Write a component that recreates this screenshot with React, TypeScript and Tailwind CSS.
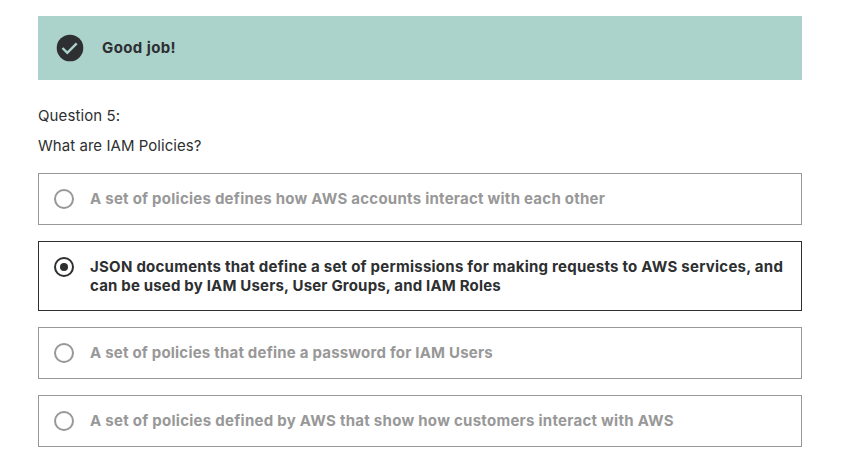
type Option = { lines: { text: string; tracking: string }[]; selected?: boolean };

const options: Option[] = [
  { lines: [{ text: 'A set of policies defines how AWS accounts interact with each other', tracking: 'tracking-[0.25px]' }] },
  {
    lines: [
      { text: 'JSON documents that define a set of permissions for making requests to AWS services, and', tracking: 'tracking-[0.25px]' },
      { text: 'can be used by IAM Users, User Groups, and IAM Roles', tracking: 'tracking-[0.18px]' },
    ],
    selected: true,
  },
  { lines: [{ text: 'A set of policies that define a password for IAM Users', tracking: 'tracking-[0.21px]' }] },
  { lines: [{ text: 'A set of policies defined by AWS that show how customers interact with AWS', tracking: 'tracking-[0.27px]' }] },
];

function Radio({ selected }: { selected?: boolean }) {
  return (
    <svg className="mt-[15px] size-5 shrink-0" viewBox="0 0 20 20" fill="none">
      <circle cx="10" cy="10" r="9" stroke="currentColor" strokeWidth="2" />
      {selected && <circle cx="10" cy="10" r="4" fill="currentColor" />}
    </svg>
  );
}

export default function App() {
  return (
    <main className="h-[462px] w-[846px] overflow-hidden bg-white pt-4 pl-[38px] font-['Inter',sans-serif] text-[#2d2f31]">
      <div className="flex h-16 w-[764px] items-center bg-[#acd2cc] pl-[18px]">
        <svg className="size-7" viewBox="0 0 28 28" fill="none">
          <circle cx="14" cy="14" r="13.3" fill="#2d2f31" />
          <path d="m6.5 14 4.8 4.8 9.4-9.4" stroke="#acd2cc" strokeWidth="2.4" />
        </svg>
        <span className="ml-[18px] text-[15px] font-bold tracking-[0.4px]">Good job!</span>
      </div>
      <p className="mt-[26px] text-[15px] leading-5 tracking-[0.1px]">Question 5:</p>
      <p className="mt-[10px] text-[15px] leading-5 tracking-[0.05px]">What are IAM Policies?</p>
      <div className="mt-[17px] flex w-[764px] flex-col gap-4">
        {options.map((option) => (
          <div
            key={option.lines[0].text}
            className={`flex border pl-[15px] ${option.selected ? 'h-[70px] border-[#2d2f31]' : 'h-[52px] border-[#989898] text-[#989898]'}`}
          >
            <Radio selected={option.selected} />
            <div className="ml-4 pt-[15px] text-[15px] leading-[19px] font-bold whitespace-nowrap">
              {option.lines.map((line) => (
                <div key={line.text} className={line.tracking}>{line.text}</div>
              ))}
            </div>
          </div>
        ))}
      </div>
    </main>
  );
}
